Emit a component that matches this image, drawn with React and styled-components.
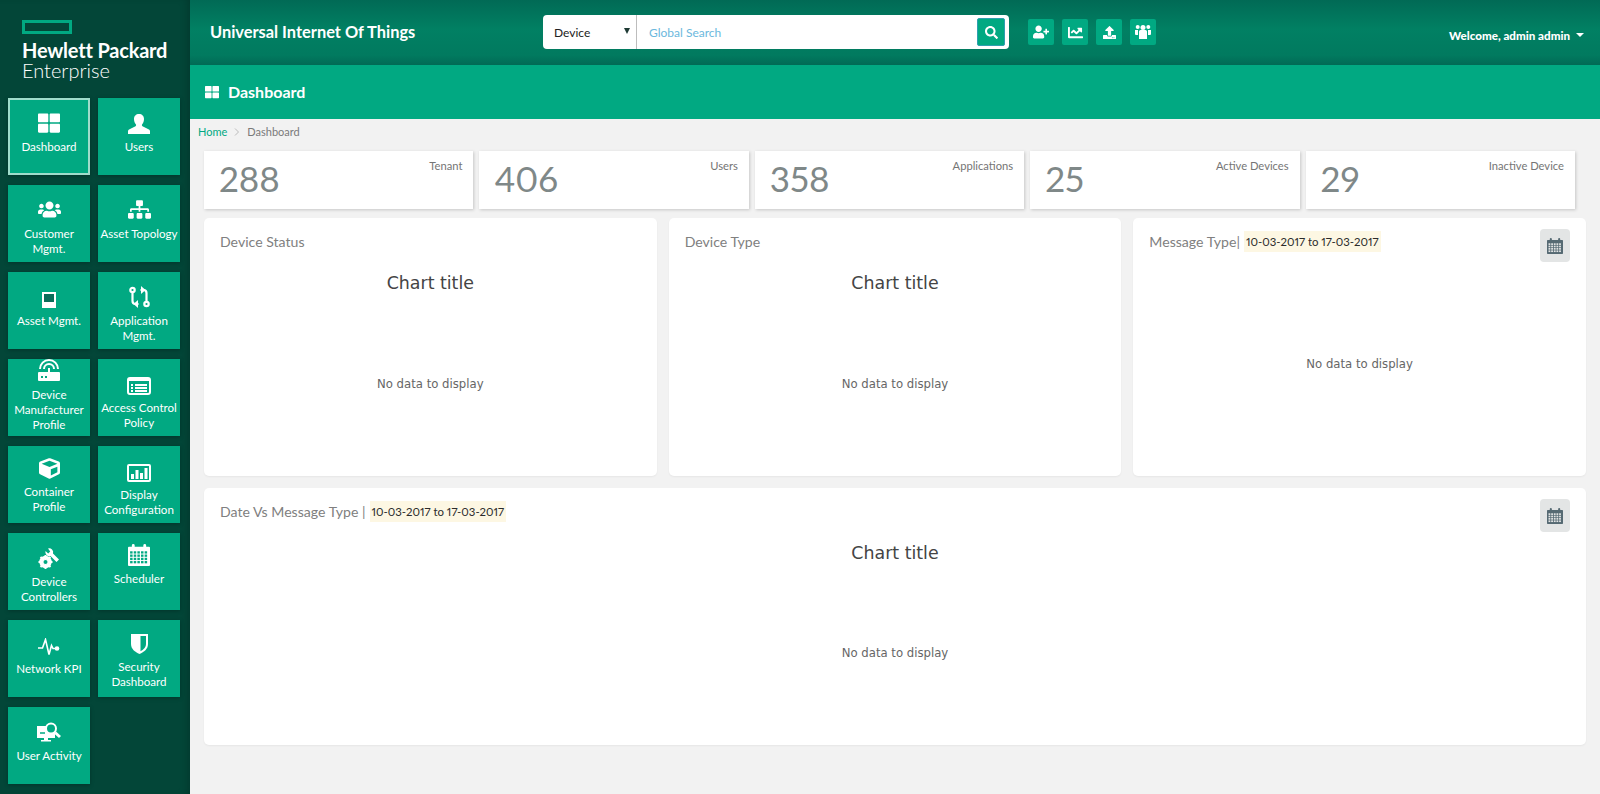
import styled, { createGlobalStyle } from "styled-components";
import {
  FaThLarge,
  FaUsers,
  FaSitemap,
  FaCube,
  FaSearch,
  FaUserPlus,
  FaChartLine,
  FaUpload,
} from "react-icons/fa";

const GlobalStyle = createGlobalStyle`
  html, body {
    margin: 0;
    padding: 0;
    height: 100%;
    background: #f2f2f2;
    font-family: Lato, "Open Sans", sans-serif;
  }
  * {
    box-sizing: border-box;
  }
`;

const Page = styled.div`
  display: flex;
  height: 794px;
  overflow: hidden;
`;

const Sidebar = styled.aside`
  flex: 0 0 190px;
  background: #034638;
  box-shadow: inset -6px 0 8px -4px rgba(0, 0, 0, 0.2);
  padding: 20px 10px 0 8px;
`;

const Logo = styled.div`
  padding-left: 14px;
  height: 78px;
  color: #fff;
`;

const LogoMark = styled.div`
  width: 50px;
  height: 14px;
  border: 3px solid #01a982;
`;

const LogoBold = styled.div`
  margin-top: 7px;
  font-size: 20px;
  line-height: 19px;
  font-weight: 700;
  letter-spacing: -0.2px;
`;

const LogoLight = styled.div`
  font-size: 20px;
  line-height: 20px;
  font-weight: 300;
`;

const TileGrid = styled.nav`
  display: grid;
  grid-template-columns: 82px 82px;
  grid-auto-rows: 77px;
  column-gap: 8px;
  row-gap: 10px;
`;

const Tile = styled.a`
  display: flex;
  flex-direction: column;
  align-items: center;
  background: #01a982;
  color: #fff;
  box-shadow: 0 1px 4px rgba(0, 0, 0, 0.25);
  border: ${(props) => (props.$active ? "2px solid #9fdccb" : "none")};
  margin: 0;
`;

const TileIcon = styled.div`
  flex: 0 0 auto;
  height: ${(props) => props.$slot}px;
  padding-bottom: 5px;
  display: flex;
  align-items: flex-end;
  justify-content: center;
`;

const TileLabel = styled.div`
  font-size: 11.6px;
  line-height: 15px;
  text-align: center;
  white-space: pre-line;
`;

const Main = styled.div`
  flex: 1;
  min-width: 0;
  display: flex;
  flex-direction: column;
`;

const TopBar = styled.header`
  flex: 0 0 65px;
  display: flex;
  align-items: flex-start;
  background: linear-gradient(180deg, #016a55 0%, #018063 45%, #017a5f 85%, #016a55 100%);
  padding: 15px 16px 0 20px;
  color: #fff;
`;

const AppTitle = styled.div`
  flex: 0 0 333px;
  font-size: 16.4px;
  line-height: 34px;
  font-weight: 700;
`;

const SearchBox = styled.div`
  flex: 0 0 466px;
  height: 34px;
  display: flex;
  background: #fff;
  border-radius: 4px;
`;

const DeviceSelect = styled.div`
  flex: 0 0 94px;
  display: flex;
  align-items: center;
  justify-content: space-between;
  padding: 0 6px 0 11px;
  border-right: 1px solid #bdbdbd;
  color: #222;
  font-size: 12px;
`;

const DownTriangle = styled.span`
  width: 0;
  height: 0;
  margin-bottom: 3px;
  border-left: 3.5px solid transparent;
  border-right: 3.5px solid transparent;
  border-top: 6px solid #1e3a34;
`;

const SearchText = styled.div`
  flex: 1;
  padding: 1px 0 0 12px;
  font-size: 12px;
  line-height: 34px;
  color: #6bb8dd;
`;

const SearchButton = styled.button`
  width: 28px;
  height: 28px;
  margin: 3px 4px 0 0;
  padding: 0;
  display: flex;
  align-items: center;
  justify-content: center;
  background: #01a982;
  border: 1px solid #2f9fb0;
  border-radius: 2px;
  color: #fff;
`;

const QuickActions = styled.div`
  display: flex;
  gap: 8px;
  margin: 4px 0 0 19px;
`;

const QuickButton = styled.button`
  width: 26px;
  height: 26px;
  padding: 0;
  display: flex;
  align-items: center;
  justify-content: center;
  background: #01a982;
  border: none;
  border-radius: 2px;
  color: #fff;
`;

const Welcome = styled.div`
  margin-left: auto;
  display: flex;
  align-items: center;
  gap: 6px;
  height: 12px;
  margin-top: 14px;
  font-size: 11.6px;
  font-weight: 900;
`;

const Caret = styled.span`
  width: 0;
  height: 0;
  border-left: 4px solid transparent;
  border-right: 4px solid transparent;
  border-top: 4px solid #fff;
`;

const Band = styled.div`
  flex: 0 0 54px;
  display: flex;
  align-items: center;
  gap: 9px;
  padding-left: 15px;
  padding-bottom: 1px;
  background: #01a982;
  color: #fff;
  font-size: 16px;
  font-weight: 700;
`;

const Breadcrumb = styled.div`
  display: flex;
  align-items: center;
  gap: 7px;
  height: 26px;
  padding: 0 0 1px 8px;
  font-size: 11px;
  color: #7a7a7a;
`;

const Crumb = styled.span`
  color: #01a982;
`;

const Content = styled.div`
  padding: 6px 14px 0;
`;

const StatRow = styled.div`
  display: grid;
  grid-template-columns: repeat(5, 1fr);
  gap: 6px;
  margin-right: 11px;
`;

const Stat = styled.div`
  height: 58px;
  display: flex;
  justify-content: space-between;
  background: #fff;
  box-shadow: 1px 1px 3px rgba(0, 0, 0, 0.18);
  padding: 0 11px 0 15px;
  color: #7f8888;
`;

const StatValue = styled.div`
  font-size: 35px;
  line-height: 54px;
  font-weight: 400;
  font-variant-numeric: proportional-nums;
`;

const StatLabel = styled.div`
  font-size: 11.2px;
  line-height: 14px;
  margin-top: 8px;
  color: #757575;
`;

const ChartRow = styled.div`
  display: grid;
  grid-template-columns: repeat(3, 1fr);
  gap: 12px;
  margin-top: 9px;
`;

const Card = styled.section`
  height: ${(props) => props.$height}px;
  margin-top: ${(props) => props.$gap || 0}px;
  padding: 11px 16px 0;
  background: #fff;
  border-radius: 5px;
  box-shadow: 0 1px 2px rgba(0, 0, 0, 0.05);
`;

const CardHead = styled.div`
  display: flex;
  align-items: flex-start;
  justify-content: space-between;
  height: 33px;
`;

const CardTitle = styled.div`
  display: flex;
  align-items: center;
  height: 21px;
  margin-top: 2px;
  font-size: 14.1px;
  color: #808080;
`;

const DateRange = styled.span`
  height: 21px;
  margin-left: 4px;
  padding: 0 2px;
  line-height: 21px;
  background: #fdf7e3;
  color: #2b2b2b;
  font-size: 11.4px;
  font-variant-numeric: proportional-nums;
`;

const CalendarButton = styled.button`
  width: 30px;
  height: 33px;
  padding: 0;
  display: flex;
  align-items: center;
  justify-content: center;
  background: #e3e5e5;
  border: none;
  border-radius: 4px;
  color: #566a73;
`;

const ChartTitle = styled.div`
  margin-top: 9px;
  font-family: "DejaVu Sans", sans-serif;
  font-size: 17.4px;
  line-height: 24px;
  text-align: center;
  color: #444;
`;

const NoData = styled.div`
  margin-top: ${(props) => props.$top}px;
  font-family: "DejaVu Sans", sans-serif;
  font-size: 11.7px;
  line-height: 16px;
  text-align: center;
  color: #666;
`;

const BustIcon = () => (
  <svg width="22" height="20" viewBox="0 0 22 20">
    <path
      fill="#fff"
      d="M11 0c3 0 5 2 5 5 0 2-.7 4-1.800 5.300-.5.600-.4 1.500.3 1.900L21 15.500c.7.400 1 .9 1 1.700V20H0v-2.800c0-.8.300-1.300 1-1.700l6.500-3.300c.7-.4.800-1.300.3-1.900C6.700 9 6 7 6 5c0-3 2-5 5-5z"
    />
  </svg>
);

const TabletIcon = () => (
  <svg width="14" height="16" viewBox="0 0 14 16">
    <path fill="#fff" fillRule="evenodd" d="M0 0h14v16H0zM2 2v8h10V2z" />
    <rect x="2" y="2" width="10" height="8" fill="#0a6e5a" />
  </svg>
);

const CompareIcon = () => (
  <svg width="21" height="22" viewBox="0 0 21 22" fill="none" stroke="#fff" strokeWidth="2.200">
    <circle cx="3.500" cy="4" r="2.200" />
    <circle cx="17.500" cy="18" r="2.200" />
    <path d="M3.500 6.500V15c0 2 1 3 3 3h3" />
    <path d="M17.500 15.500V7c0-2-1-3-3-3h-3" />
    <path fill="#fff" stroke="none" d="M9 14v8l-4.500-4zM12 0v8l4.500-4z" />
  </svg>
);

const RouterIcon = () => (
  <svg width="24" height="23" viewBox="0 0 24 23" fill="none" stroke="#fff">
    <path strokeWidth="2" d="M3 10a9 9 0 0 1 18 0" />
    <path strokeWidth="2" d="M7 10a5 5 0 0 1 10 0" />
    <path strokeWidth="2" d="M12 9v5" />
    <path fill="#fff" stroke="none" d="M2 13h20a1 1 0 0 1 1 1v7a1 1 0 0 1-1 1H2a1 1 0 0 1-1-1v-7a1 1 0 0 1 1-1z" />
    <path stroke="#01a982" strokeWidth="2" strokeDasharray="2 2" d="M4 18h6" />
  </svg>
);

const PolicyIcon = () => (
  <svg width="24" height="18" viewBox="0 0 24 18">
    <rect x="1" y="1" width="22" height="16" rx="2" fill="none" stroke="#fff" strokeWidth="2" />
    <path fill="#fff" d="M1 1h22v3H1zM4 7h2v2H4zM8 7h12v2H8zM4 10h2v2H4zM8 10h12v2H8zM4 13h2v2H4zM8 13h12v2H8z" />
  </svg>
);

const DisplayIcon = () => (
  <svg width="24" height="18" viewBox="0 0 24 18">
    <rect x="1" y="1" width="22" height="16" rx="1" fill="none" stroke="#fff" strokeWidth="2" />
    <path fill="#fff" d="M4 10h3v5H4zM8.500 6h3v9h-3zM13 9h3v6h-3zM17.500 4h3v11h-3z" />
  </svg>
);

const ToolsIcon = () => (
  <svg width="22" height="22" viewBox="0 0 22 22">
    <path fill="#fff" d="M10 1.500a4 4 0 0 1 5 5l6 6-2.500 2.500-6-6a4 4 0 0 1-5-5l2.700 2.500 2-2z" />
    <circle cx="7.500" cy="15" r="4.500" fill="none" stroke="#fff" strokeWidth="3.400" />
    <path stroke="#fff" strokeWidth="2" d="M7.500 8v14M.500 15h14M2.500 10l10 10M12.500 10l-10 10" />
    <circle cx="7.500" cy="15" r="2" fill="#01a982" />
  </svg>
);

// calendar with the grid drawn cell by cell, same shape in the tile and on the cards
const GridCalendar = ({ size, color, hole }) => {
  const cells = [];
  for (let row = 0; row < 4; row++) {
    for (let col = 0; col < 5; col++) {
      cells.push(<rect key={`${row}-${col}`} x={2.2 + col * 3.8} y={7.6 + row * 3.4} width="2.600" height="2.400" fill={hole} />);
    }
  }
  return (
    <svg width={size} height={size} viewBox="0 0 23 23">
      <path fill={color} d="M1 3h3V1.500a1.500 1.500 0 0 1 3 0V3h9V1.500a1.500 1.500 0 0 1 3 0V3h3a1 1 0 0 1 1 1v18a1 1 0 0 1-1 1H1a1 1 0 0 1-1-1V4a1 1 0 0 1 1-1z" />
      {cells}
    </svg>
  );
};

const PulseIcon = () => (
  <svg width="22" height="18" viewBox="0 0 22 18" fill="none">
    <path stroke="#fff" strokeWidth="1.600" d="M0 10h4.500L7.500 1.500 11 16.500l2.500-9 1.500 3h4" />
    <circle cx="19" cy="10.500" r="2.300" fill="#fff" />
  </svg>
);

const ShieldIcon = () => (
  <svg width="17" height="20" viewBox="0 0 17 20">
    <path fill="#fff" d="M0 0h17v10c0 5-4 8-8.500 10C4 18 0 15 0 10z" />
    <path fill="#01a982" d="M9.500 2H15v8c0 3.500-2.500 5.500-5.500 7.300z" />
  </svg>
);

const ActivityIcon = () => (
  <svg width="24" height="21" viewBox="0 0 24 21">
    <path fill="#fff" d="M0 4h18v12H0zM7 16h4v2h3v1.500H4V18h3z" />
    <circle cx="14" cy="6.500" r="5" fill="#01a982" stroke="#fff" strokeWidth="2" />
    <path stroke="#fff" strokeWidth="3" d="M18 10.500l5 4.500" />
    <path stroke="#01a982" strokeWidth="1.500" d="M3 11h5" />
  </svg>
);

const GroupIcon = () => (
  <svg width="16" height="16" viewBox="0 0 16 16">
    <path fill="#fff" d="M5.500 6h5a1.500 1.500 0 0 1 1.500 1.500V15H4V7.500A1.500 1.500 0 0 1 5.500 6z" />
    <circle cx="8" cy="3.500" r="2.500" fill="#fff" />
    <circle cx="2.700" cy="3" r="2" fill="#fff" />
    <circle cx="13.300" cy="3" r="2" fill="#fff" />
    <path fill="#fff" d="M0 6h3v5H1a1 1 0 0 1-1-1zM13 6h3v4a1 1 0 0 1-1 1h-2z" />
  </svg>
);

const tiles = [
  { label: "Dashboard", icon: <FaThLarge size={22} />, active: true, slot: 39 },
  { label: "Users", icon: <BustIcon />, slot: 41 },
  { label: "Customer\nMgmt.", icon: <FaUsers size={23} /> },
  { label: "Asset Topology", icon: <FaSitemap size={23} /> },
  { label: "Asset Mgmt.", icon: <TabletIcon /> },
  { label: "Application\nMgmt.", icon: <CompareIcon /> },
  { label: "Device\nManufacturer\nProfile", icon: <RouterIcon />, slot: 28 },
  { label: "Access Control\nPolicy", icon: <PolicyIcon /> },
  { label: "Container\nProfile", icon: <FaCube size={21} />, slot: 38 },
  { label: "Display\nConfiguration", icon: <DisplayIcon /> },
  { label: "Device\nControllers", icon: <ToolsIcon /> },
  { label: "Scheduler", icon: <GridCalendar size={22} color="#fff" hole="#01a982" />, slot: 38 },
  { label: "Network KPI", icon: <PulseIcon /> },
  { label: "Security\nDashboard", icon: <ShieldIcon />, slot: 39 },
  { label: "User Activity", icon: <ActivityIcon /> },
];

const stats = [
  { value: "288", label: "Tenant" },
  { value: "406", label: "Users" },
  { value: "358", label: "Applications" },
  { value: "25", label: "Active Devices" },
  { value: "29", label: "Inactive Device" },
];

const App = () => {
  return (
    <>
      <GlobalStyle />
      <Page>
        <Sidebar>
          <Logo>
            <LogoMark />
            <LogoBold>Hewlett Packard</LogoBold>
            <LogoLight>Enterprise</LogoLight>
          </Logo>
          <TileGrid>
            {tiles.map((tile) => (
              <Tile key={tile.label} $active={tile.active}>
                <TileIcon $slot={tile.slot || 41}>{tile.icon}</TileIcon>
                <TileLabel>{tile.label}</TileLabel>
              </Tile>
            ))}
          </TileGrid>
        </Sidebar>
        <Main>
          <TopBar>
            <AppTitle>Universal Internet Of Things</AppTitle>
            <SearchBox>
              <DeviceSelect>
                Device
                <DownTriangle />
              </DeviceSelect>
              <SearchText>Global Search</SearchText>
              <SearchButton>
                <FaSearch size={13} />
              </SearchButton>
            </SearchBox>
            <QuickActions>
              <QuickButton>
                <FaUserPlus size={16} />
              </QuickButton>
              <QuickButton>
                <FaChartLine size={15} />
              </QuickButton>
              <QuickButton>
                <FaUpload size={13} />
              </QuickButton>
              <QuickButton>
                <GroupIcon />
              </QuickButton>
            </QuickActions>
            <Welcome>
              Welcome, admin admin
              <Caret />
            </Welcome>
          </TopBar>
          <Band>
            <FaThLarge size={14} />
            Dashboard
          </Band>
          <Breadcrumb>
            <Crumb>Home</Crumb>
            <svg width="6" height="8" viewBox="0 0 6 8" fill="none">
              <path stroke="#bbb" d="M1 0.500l3.500 3.500L1 7.500" />
            </svg>
            <span>Dashboard</span>
          </Breadcrumb>
          <Content>
            <StatRow>
              {stats.map((stat) => (
                <Stat key={stat.label}>
                  <StatValue>{stat.value}</StatValue>
                  <StatLabel>{stat.label}</StatLabel>
                </Stat>
              ))}
            </StatRow>
            <ChartRow>
              <Card $height={258}>
                <CardHead>
                  <CardTitle>Device Status</CardTitle>
                </CardHead>
                <ChartTitle>Chart title</ChartTitle>
                <NoData $top={81}>No data to display</NoData>
              </Card>
              <Card $height={258}>
                <CardHead>
                  <CardTitle>Device Type</CardTitle>
                </CardHead>
                <ChartTitle>Chart title</ChartTitle>
                <NoData $top={81}>No data to display</NoData>
              </Card>
              <Card $height={258}>
                <CardHead>
                  <CardTitle>
                    Message Type|
                    <DateRange>10-03-2017 to 17-03-2017</DateRange>
                  </CardTitle>
                  <CalendarButton>
                    <GridCalendar size={16} color="#566a73" hole="#e3e5e5" />
                  </CalendarButton>
                </CardHead>
                <NoData $top={94}>No data to display</NoData>
              </Card>
            </ChartRow>
            <Card $height={257} $gap={12}>
              <CardHead>
                <CardTitle>
                  Date Vs Message Type |
                  <DateRange>10-03-2017 to 17-03-2017</DateRange>
                </CardTitle>
                <CalendarButton>
                  <GridCalendar size={16} color="#566a73" hole="#e3e5e5" />
                </CalendarButton>
              </CardHead>
              <ChartTitle>Chart title</ChartTitle>
              <NoData $top={80}>No data to display</NoData>
            </Card>
          </Content>
        </Main>
      </Page>
    </>
  );
};

export default App;
